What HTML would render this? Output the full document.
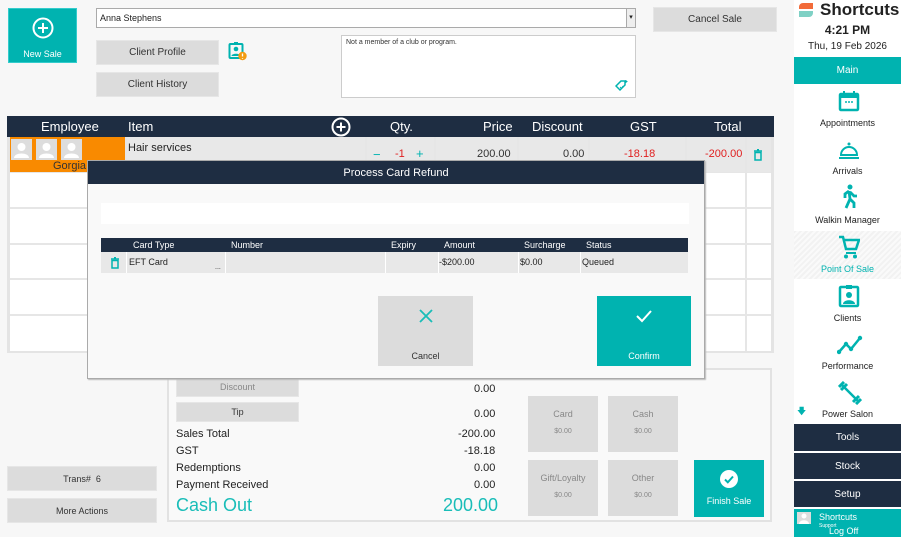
<!DOCTYPE html>
<html><head><style>
*{box-sizing:border-box;margin:0;padding:0}
body{width:901px;height:537px;background:#f7f7f7;font-family:"Liberation Sans",sans-serif;color:#222;position:relative;overflow:hidden}
.a{position:absolute}
.btn{position:absolute;background:#dcdcdc;border:1px solid #e6e6e6;font-size:10px;color:#333;display:flex;align-items:center;justify-content:center}
.teal{background:#00b3b0;color:#fff}
.dark{background:#1e2d42;color:#fff}
.c{display:flex;align-items:center;justify-content:center}
.th{position:absolute;top:0;height:21px;line-height:21px;font-size:13px;color:#fff}
.vl{position:absolute;width:2px;background:#e6e6e6}
.sb{position:absolute;left:794px;width:107px;text-align:center;font-size:9px;color:#222}
.lbl{position:absolute;font-size:11px;color:#222}
.pay{position:absolute;background:#dcdcdc;width:70px;height:56px;font-size:9px;color:#888;text-align:center}
</style></head><body>

<div class="a teal" style="left:8px;top:8px;width:69px;height:55px;border:1px solid #3cc">
<svg class="a" style="left:23px;top:8px" width="22" height="22" viewBox="0 0 22 22"><circle cx="11" cy="11" r="9.5" fill="none" stroke="#fff" stroke-width="2"/><path d="M11 6v10M6 11h10" stroke="#fff" stroke-width="2"/></svg>
<div class="a" style="left:0;top:40px;width:67px;text-align:center;font-size:9px">New Sale</div></div>

<div class="a" style="left:96px;top:8px;width:540px;height:20px;background:#fff;border:1px solid #aaa;font-size:9px;line-height:18px;padding-left:3px">Anna Stephens
<div class="a" style="right:0;top:0;width:9px;height:18px;border-left:1px solid #aaa;background:#eee;font-size:7px;line-height:18px;text-align:center">▾</div></div>
<div class="btn" style="left:96px;top:40px;width:123px;height:25px">Client Profile</div>
<div class="btn" style="left:96px;top:72px;width:123px;height:25px">Client History</div>
<svg class="a" style="left:228px;top:41px" width="20" height="20" viewBox="0 0 20 20"><rect x="1.5" y="3" width="13" height="14" rx="1" fill="none" stroke="#00b3b0" stroke-width="2"/><rect x="6" y="1" width="4" height="3" fill="#00b3b0"/><circle cx="8" cy="8" r="2.3" fill="#00b3b0"/><path d="M3.5 15c0-3 9-3 9 0z" fill="#00b3b0"/><circle cx="14.5" cy="15" r="4.2" fill="#f39c12"/><path d="M14.5 12.5v3M14.5 17v.8" stroke="#fff" stroke-width="1.3"/></svg>
<div class="a" style="left:341px;top:35px;width:295px;height:63px;background:#fff;border:1px solid #ccc;font-size:7px;padding:3px 4px;color:#333">Not a member of a club or program.
<svg class="a" style="right:6px;bottom:5px" width="14" height="12" viewBox="0 0 14 12"><path d="M1 6l5-5h4v4l-5 5z" fill="none" stroke="#00b3b0" stroke-width="1.5"/><path d="M5 7l1.5 1.5L8 6" stroke="#00b3b0" fill="none"/><path d="M11 0v3M9.5 1.5h3" stroke="#00b3b0"/></svg></div>
<div class="btn" style="left:653px;top:7px;width:124px;height:25px">Cancel Sale</div>

<div class="a" style="left:7px;top:116px;width:767px;height:237px;background:#e4e4e4">
<div class="a dark" style="left:0;top:0;width:767px;height:21px"></div>
<div class="th" style="left:34px">Employee</div>
<div class="th" style="left:121px">Item</div>
<svg class="a" style="left:324px;top:1px" width="20" height="20" viewBox="0 0 20 20"><circle cx="10" cy="10" r="8.5" fill="none" stroke="#fff" stroke-width="2"/><path d="M10 5.5v9M5.5 10h9" stroke="#fff" stroke-width="2"/></svg>
<div class="th" style="left:383px">Qty.</div>
<div class="th" style="left:476px">Price</div>
<div class="th" style="left:525px">Discount</div>
<div class="th" style="left:623px">GST</div>
<div class="th" style="left:707px">Total</div>
<div class="a" style="left:3px;top:21px;width:761px;height:35px;background:#e8e8e8"></div>
<div class="a" style="left:3px;top:21px;width:115px;height:35px;background:#f98a00"></div>
<div class="a" style="left:4px;top:23px;width:21px;height:21px;background:#ddd"></div>
<div class="a" style="left:29px;top:23px;width:21px;height:21px;background:#ddd"></div>
<div class="a" style="left:54px;top:23px;width:21px;height:21px;background:#ddd"></div>
<svg class="a" style="left:4px;top:23px" width="71" height="21" viewBox="0 0 71 21"><g fill="#fff"><circle cx="10.5" cy="8" r="4"/><path d="M3 19c0-6 15-6 15 0z"/><circle cx="35.5" cy="8" r="4"/><path d="M28 19c0-6 15-6 15 0z"/><circle cx="60.5" cy="8" r="4"/><path d="M53 19c0-6 15-6 15 0z"/></g></svg>
<div class="a" style="left:46px;top:44px;font-size:11px;color:#333">Gorgia</div>
<div class="a" style="left:121px;top:26px;font-size:11px">Hair services</div>
<div class="a" style="left:366px;top:31px;font-size:13px;color:#00b3b0">−</div>
<div class="a" style="left:388px;top:32px;font-size:11px;color:#e02020">-1</div>
<div class="a" style="left:409px;top:30px;font-size:13px;color:#00b3b0">+</div>
<div class="a" style="left:470px;top:32px;font-size:11px;color:#333">200.00</div>
<div class="a" style="left:556px;top:32px;font-size:11px;color:#333">0.00</div>
<div class="a" style="left:617px;top:32px;font-size:11px;color:#e02020">-18.18</div>
<div class="a" style="left:698px;top:32px;font-size:11px;color:#e02020">-200.00</div>
<svg class="a" style="left:746px;top:33px" width="10" height="12" viewBox="0 0 10 12"><path d="M1 2h8M4 0.5h2" stroke="#00b3b0" stroke-width="1.4"/><rect x="2" y="3.5" width="6" height="7.5" fill="none" stroke="#00b3b0" stroke-width="1.5"/></svg>
<div class="a" style="left:3px;top:57px;width:761px;height:178px;background:#fff"></div>
</div>
<div class="vl" style="left:125px;top:137px;height:35px"></div>
<div class="vl" style="left:365px;top:137px;height:35px"></div>
<div class="vl" style="left:434px;top:137px;height:35px"></div>
<div class="vl" style="left:517px;top:137px;height:35px"></div>
<div class="vl" style="left:588px;top:137px;height:35px"></div>
<div class="vl" style="left:685px;top:137px;height:35px"></div>
<div class="vl" style="left:745px;top:137px;height:214px"></div>
<div class="a" style="left:10px;top:207px;width:761px;height:2px;background:#e6e6e6"></div>
<div class="a" style="left:10px;top:243px;width:761px;height:2px;background:#e6e6e6"></div>
<div class="a" style="left:10px;top:278px;width:761px;height:2px;background:#e6e6e6"></div>
<div class="a" style="left:10px;top:314px;width:761px;height:2px;background:#e6e6e6"></div>
<div class="a" style="left:10px;top:172px;width:761px;height:1px;background:#e6e6e6"></div>

<div class="a" style="left:167px;top:368px;width:605px;height:154px;border:2px solid #e2e2e2;background:#f9f9f9"></div>
<div class="btn" style="left:176px;top:377px;width:123px;height:20px;color:#888;font-size:9px">Discount</div>
<div class="btn" style="left:176px;top:402px;width:123px;height:20px;font-size:9px">Tip</div>
<div class="lbl" style="left:474px;top:383px">0.00</div>
<div class="lbl" style="left:474px;top:408px">0.00</div>
<div class="lbl" style="left:176px;top:428px">Sales Total</div><div class="lbl" style="left:458px;top:428px">-200.00</div>
<div class="lbl" style="left:176px;top:445px">GST</div><div class="lbl" style="left:464px;top:445px">-18.18</div>
<div class="lbl" style="left:176px;top:462px">Redemptions</div><div class="lbl" style="left:474px;top:462px">0.00</div>
<div class="lbl" style="left:176px;top:479px">Payment Received</div><div class="lbl" style="left:474px;top:479px">0.00</div>
<div class="a" style="left:176px;top:495px;font-size:18px;color:#19bdb8">Cash Out</div>
<div class="a" style="left:443px;top:495px;font-size:18px;color:#19bdb8">200.00</div>
<div class="pay" style="left:528px;top:396px"><div style="margin-top:13px">Card</div><div style="margin-top:9px;font-size:7px">$0.00</div></div>
<div class="pay" style="left:608px;top:396px"><div style="margin-top:13px">Cash</div><div style="margin-top:9px;font-size:7px">$0.00</div></div>
<div class="pay" style="left:528px;top:460px"><div style="margin-top:13px">Gift/Loyalty</div><div style="margin-top:9px;font-size:7px">$0.00</div></div>
<div class="pay" style="left:608px;top:460px"><div style="margin-top:13px">Other</div><div style="margin-top:9px;font-size:7px">$0.00</div></div>
<div class="a teal" style="left:694px;top:460px;width:70px;height:57px;text-align:center;font-size:9px">
<svg style="margin-top:10px" width="18" height="18" viewBox="0 0 18 18"><circle cx="9" cy="9" r="9" fill="#fff"/><path d="M5 9.5l2.8 2.8L13 6.5" stroke="#00b3b0" stroke-width="2" fill="none"/></svg>
<div style="margin-top:6px">Finish Sale</div></div>
<div class="btn" style="left:7px;top:466px;width:150px;height:25px;font-size:9px">Trans# &nbsp;6</div>
<div class="btn" style="left:7px;top:498px;width:150px;height:25px;font-size:9px">More Actions</div>

<div class="a" style="left:87px;top:160px;width:618px;height:219px;background:#f9f9f9;border:1px solid #aaa;box-shadow:1px 1px 1px #bbb">
<div class="a dark c" style="left:0;top:0;width:616px;height:23px;font-size:11px">Process Card Refund</div>
<div class="a" style="left:13px;top:42px;width:588px;height:21px;background:#fff"></div>
<div class="a dark" style="left:13px;top:77px;width:587px;height:14px;font-size:9px;line-height:14px">
<span class="a" style="left:32px">Card Type</span><span class="a" style="left:130px">Number</span><span class="a" style="left:290px">Expiry</span><span class="a" style="left:343px">Amount</span><span class="a" style="left:423px">Surcharge</span><span class="a" style="left:485px">Status</span></div>
<div class="a" style="left:13px;top:91px;width:587px;height:21px;background:#e8e8e8;font-size:9px;line-height:21px">
<svg class="a" style="left:9px;top:5px" width="10" height="12" viewBox="0 0 10 12"><path d="M1 2h8M4 0.5h2" stroke="#00b3b0" stroke-width="1.4"/><rect x="2" y="3.5" width="6" height="7.5" fill="none" stroke="#00b3b0" stroke-width="1.5"/></svg>
<div class="a" style="left:25px;top:0;width:1px;height:21px;background:#fff"></div>
<span class="a" style="left:28px">EFT Card</span><span class="a" style="left:114px;top:5px;font-size:7px">...</span>
<div class="a" style="left:124px;top:0;width:1px;height:21px;background:#fff"></div>
<div class="a" style="left:284px;top:0;width:1px;height:21px;background:#fff"></div>
<div class="a" style="left:337px;top:0;width:1px;height:21px;background:#fff"></div>
<span class="a" style="left:338px">-$200.00</span>
<div class="a" style="left:417px;top:0;width:1px;height:21px;background:#fff"></div>
<span class="a" style="left:419px">$0.00</span>
<div class="a" style="left:479px;top:0;width:1px;height:21px;background:#fff"></div>
<span class="a" style="left:481px">Queued</span></div>
<div class="a" style="left:290px;top:135px;width:95px;height:70px;background:#dcdcdc;text-align:center;font-size:9px;color:#333">
<svg style="margin-top:12px" width="16" height="16" viewBox="0 0 16 16"><path d="M2 2l12 12M14 2L2 14" stroke="#19bdb8" stroke-width="1.8"/></svg>
<div style="margin-top:25px">Cancel</div></div>
<div class="a teal" style="left:509px;top:135px;width:94px;height:70px;text-align:center;font-size:9px">
<svg style="margin-top:12px" width="18" height="16" viewBox="0 0 18 16"><path d="M2 8l5 5L16 3" stroke="#fff" stroke-width="2" fill="none"/></svg>
<div style="margin-top:25px">Confirm</div></div>
</div>

<div class="a" style="left:794px;top:0;width:107px;height:537px;background:#fff"></div>
<svg class="a" style="left:798px;top:2px" width="16" height="16" viewBox="0 0 16 16"><path d="M1 5a4 4 0 0 1 4-4h10v6H1z" fill="#f26b3a"/><path d="M1 9h14v2a4 4 0 0 1-4 4H1z" fill="#7fd1c5"/></svg>
<div class="a" style="left:820px;top:0px;font-size:17px;font-weight:bold;color:#222">Shortcuts</div>
<div class="sb" style="top:23px;font-size:12px;font-weight:bold">4:21 PM</div>
<div class="sb" style="top:41px;font-size:10px">Thu, 19 Feb 2026</div>
<div class="sb teal c" style="top:57px;height:27px;font-size:10px;color:#fff">Main</div>
<svg class="a" style="left:838px;top:90px" width="22" height="22" viewBox="0 0 22 22"><rect x="2" y="4" width="18" height="16" rx="1" fill="none" stroke="#00b3b0" stroke-width="2.5"/><rect x="2" y="4" width="18" height="4" fill="#00b3b0"/><path d="M6 1v4M16 1v4" stroke="#00b3b0" stroke-width="2"/><path d="M7 12h2M10 12h2M13 12h2" stroke="#00b3b0" stroke-width="1.5"/></svg>
<div class="sb" style="top:118px">Appointments</div>
<svg class="a" style="left:838px;top:141px" width="22" height="20" viewBox="0 0 22 20"><circle cx="11" cy="3" r="1.5" fill="#00b3b0"/><path d="M3 14a8 8 0 0 1 16 0z" fill="none" stroke="#00b3b0" stroke-width="2"/><path d="M1 17h20" stroke="#00b3b0" stroke-width="2"/></svg>
<div class="sb" style="top:166px">Arrivals</div>
<svg class="a" style="left:840px;top:184px" width="20" height="26" viewBox="0 0 20 26"><circle cx="10" cy="3" r="2.5" fill="#00b3b0"/><path d="M9 7l-4 3v4M9 7l1 8-4 9M10 15l4 4v5M10 8l4 4h3" stroke="#00b3b0" stroke-width="2.8" fill="none"/></svg>
<div class="sb" style="top:215px">Walkin Manager</div>
<div class="a" style="left:794px;top:231px;width:107px;height:48px;background:repeating-linear-gradient(135deg,#f2f2f2 0 2px,#fafafa 2px 4px)"></div>
<svg class="a" style="left:838px;top:235px" width="22" height="24" viewBox="0 0 22 24"><path d="M1 2h4l3 12h10l3-9H6" fill="none" stroke="#00b3b0" stroke-width="2.5"/><path d="M8 18h10" stroke="#00b3b0" stroke-width="2"/><circle cx="8" cy="21.5" r="2" fill="#00b3b0"/><circle cx="17" cy="21.5" r="2" fill="#00b3b0"/></svg>
<div class="sb" style="top:264px;color:#00b3b0">Point Of Sale</div>
<svg class="a" style="left:838px;top:284px" width="22" height="24" viewBox="0 0 22 24"><rect x="2" y="3" width="18" height="19" rx="1" fill="none" stroke="#00b3b0" stroke-width="2.5"/><rect x="8" y="1" width="6" height="4" fill="#00b3b0"/><circle cx="11" cy="11" r="3" fill="#00b3b0"/><path d="M5 20c0-5 12-5 12 0z" fill="#00b3b0"/></svg>
<div class="sb" style="top:313px">Clients</div>
<svg class="a" style="left:837px;top:335px" width="26" height="20" viewBox="0 0 26 20"><path d="M2 17l7-8 5 5 9-11" stroke="#00b3b0" stroke-width="2.5" fill="none"/><circle cx="2" cy="17" r="2.2" fill="#00b3b0"/><circle cx="9" cy="9" r="2.2" fill="#00b3b0"/><circle cx="14" cy="14" r="2.2" fill="#00b3b0"/><circle cx="23" cy="3" r="2.2" fill="#00b3b0"/></svg>
<div class="sb" style="top:361px">Performance</div>
<svg class="a" style="left:838px;top:381px" width="24" height="24" viewBox="0 0 24 24"><path d="M4 4l16 16" stroke="#00b3b0" stroke-width="2.5"/><path d="M1 6l5-5M3 9l6-6M15 21l6-6M18 23l5-5" stroke="#00b3b0" stroke-width="3"/></svg>
<div class="a" style="left:797px;top:404px;font-size:9px;color:#00b3b0">🡇</div>
<div class="sb" style="top:409px">Power Salon</div>
<div class="sb dark c" style="top:424px;height:27px;font-size:10px;color:#fff">Tools</div>
<div class="sb dark c" style="top:453px;height:26px;font-size:10px;color:#fff">Stock</div>
<div class="sb dark c" style="top:481px;height:26px;font-size:10px;color:#fff">Setup</div>
<div class="sb teal" style="top:509px;height:28px"></div>
<div class="a" style="left:797px;top:512px;width:14px;height:12px;background:#ddd"></div>
<svg class="a" style="left:797px;top:512px" width="14" height="12" viewBox="0 0 14 12"><circle cx="7" cy="4" r="2.5" fill="#fff"/><path d="M2 12c0-5 10-5 10 0z" fill="#fff"/></svg>
<div class="a" style="left:819px;top:512px;font-size:9px;color:#fff">Shortcuts</div>
<div class="a" style="left:819px;top:523px;font-size:5px;color:#fff">Support</div>
<div class="a" style="left:829px;top:526px;font-size:9px;color:#fff">Log Off</div>
</body></html>
